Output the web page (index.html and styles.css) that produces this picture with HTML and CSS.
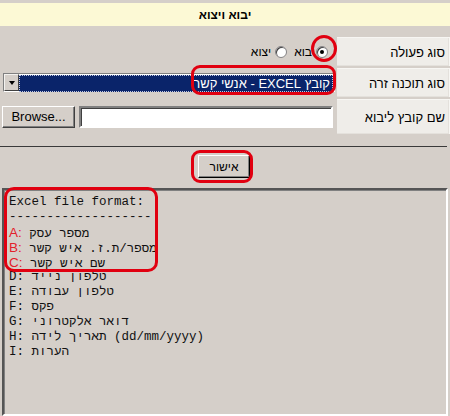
FILE: index.html
```html
<!DOCTYPE html>
<html lang="he">
<head>
<meta charset="utf-8">
<title>יבוא ויצוא</title>
<link rel="stylesheet" href="styles.css">
</head>
<body>
<div class="page">
  <div class="title-bar">יבוא ויצוא</div>
  <div class="form">
    <div class="label">סוג פעולה</div>
    <div class="field radios">
      <span class="radio checked"></span><span class="radio-text">בוא</span>
      <span class="radio"></span><span class="radio-text">יצוא</span>
    </div>
    <div class="label">סוג תוכנה זרה</div>
    <div class="field">
      <div class="select">
        <div class="select-value">קובץ EXCEL - אנשי קשר</div>
        <div class="select-arrow"><span class="tri"></span></div>
      </div>
    </div>
    <div class="label tall">שם קובץ ליבוא</div>
    <div class="field file">
      <div class="btn browse">Browse...</div>
      <div class="text-input"></div>
    </div>
  </div>
  <div class="rule"></div>
  <div class="actions"><div class="btn ok">אישור</div></div>
  <div class="textarea"><div class="line">Excel file format:</div><div class="line">-------------------</div><div class="line"><span class="key">A:</span> מספר עסק</div><div class="line"><span class="key">B:</span> מספר/ת.ז. איש קשר</div><div class="line"><span class="key">C:</span> שם איש קשר</div><div class="line">D: טלפון נייד</div><div class="line">E: טלפון עבודה</div><div class="line">F: פקס</div><div class="line">G: דואר אלקטרוני</div><div class="line">H: תאריך לידה (dd/mm/yyyy)</div><div class="line">I: הערות</div></div>
</div>
<div class="mark mark-radio"></div>
<div class="mark mark-select"></div>
<div class="mark mark-ok"></div>
<div class="mark mark-text"></div>
</body>
</html>
```
FILE: styles.css
```css
html, body {
  margin: 0;
  padding: 0;
  background: #d5cfc9;
  font-family: "Liberation Sans", Arial, sans-serif;
  font-size: 13px;
  color: #000;
}
.page {
  width: 450px;
  height: 416px;
  padding-top: 3px;
  box-sizing: border-box;
  overflow: hidden;
}
.title-bar {
  height: 23px;
  background: #fcf9d5;
  text-align: center;
  font-weight: bold;
  font-size: 12px;
  line-height: 24px;
}
.form {
  direction: rtl;
  display: grid;
  grid-template-columns: 113px 337px;
  grid-template-rows: 29px 29px 35px;
  row-gap: 2px;
  margin-top: 11px;
}
.label {
  background: #efede9;
  border-top: 1px solid #f7f6f3;
  border-right: 1px solid #f7f6f3;
  box-shadow: inset -1px -1px 0 #e4e1dc;
  padding-right: 4px;
  display: flex;
  align-items: center;
  font-size: 13px;
}
.field {
  display: flex;
  align-items: center;
  padding-right: 2px;
}
.radios {
  gap: 2px;
  padding-right: 9px;
  padding-top: 1px;
}
.radio {
  width: 12px;
  height: 12px;
  border-radius: 50%;
  background: #fff;
  box-sizing: border-box;
  border: 1px solid #848284;
  box-shadow: inset 1px 1px 0 #404040;
  position: relative;
}
.radio.checked::after {
  content: "";
  position: absolute;
  left: 3px;
  top: 3px;
  width: 4px;
  height: 4px;
  border-radius: 50%;
  background: #000;
}
.radio-text {
  font-size: 12px;
  margin-left: 5px;
  margin-right: 2px;
}
.select {
  direction: ltr;
  display: flex;
  flex-direction: row-reverse;
  width: 332px;
  height: 19px;
  box-sizing: border-box;
  border: 1px solid;
  border-color: #808080 #fff #fff #808080;
  background: #fff;
}
.select-value {
  flex: 1;
  background: #0a246a;
  color: #fff;
  text-align: right;
  direction: rtl;
  font-size: 13px;
  line-height: 16px;
  padding-right: 2px;
  margin: 1px 1px 0 0;
  border: 1px dotted #c0c8e0;
  height: 15px;
  overflow: hidden;
}
.select-arrow {
  width: 15px;
  background: #d5cfc9;
  box-sizing: border-box;
  border: 1px solid;
  border-color: #f4f2ef #404040 #404040 #f4f2ef;
  display: flex;
  align-items: center;
  justify-content: center;
}
.tri {
  width: 0;
  height: 0;
  border-left: 3.5px solid transparent;
  border-right: 3.5px solid transparent;
  border-top: 4px solid #000;
}
.file {
  direction: ltr;
  flex-direction: row;
  justify-content: flex-start;
  padding: 0 4px 0 2px;
  gap: 4px;
}
.text-input {
  flex: 1;
  height: 22px;
  box-sizing: border-box;
  background: #fff;
  border: 2px solid;
  border-color: #808080 #fff #fff #808080;
  box-shadow: inset 1px 1px 0 #404040;
}
.btn {
  box-sizing: border-box;
  background: #d5cfc9;
  border: 1px solid;
  border-color: #fff #404040 #404040 #fff;
  box-shadow: inset -1px -1px 0 #808080;
  display: flex;
  align-items: center;
  justify-content: center;
  font-size: 13px;
}
.browse {
  width: 73px;
  height: 22px;
}
.rule {
  height: 1px;
  background: #3a3a3a;
  margin: 12px 3px 0 0;
}
.actions {
  display: flex;
  justify-content: center;
  padding-top: 8px;
}
.ok {
  width: 52px;
  height: 23px;
  border-color: #fff #000 #000 #fff;
  font-size: 12px;
  margin-left: -2px;
}
.textarea {
  margin: 10px 2px 0 2px;
  height: 228px;
  box-sizing: border-box;
  border: 2px solid;
  border-color: #555 #fff #fff #555;
  box-shadow: inset 1px 1px 0 #808080;
  padding: 5px 0 0 5px;
  font-family: "Liberation Mono", "Courier New", monospace;
  font-size: 12.5px;
  line-height: 15px;
  white-space: pre;
  color: #111;
}
.line { height: 15px; }
.key {
  color: #e3202b;
  font-family: "Liberation Sans", Arial, sans-serif;
  font-size: 13.5px;
}
.mark {
  position: absolute;
  border: 3px solid #e10010;
  box-sizing: border-box;
}
.mark-radio {
  left: 311px;
  top: 35px;
  width: 26px;
  height: 27px;
  border-radius: 50%;
}
.mark-select {
  left: 191px;
  top: 65px;
  width: 145px;
  height: 30px;
  border-radius: 9px;
}
.mark-ok {
  left: 191px;
  top: 150px;
  width: 62px;
  height: 33px;
  border-radius: 9px;
}
.mark-text {
  left: 4px;
  top: 187px;
  width: 154px;
  height: 85px;
  border-radius: 10px;
}
```
